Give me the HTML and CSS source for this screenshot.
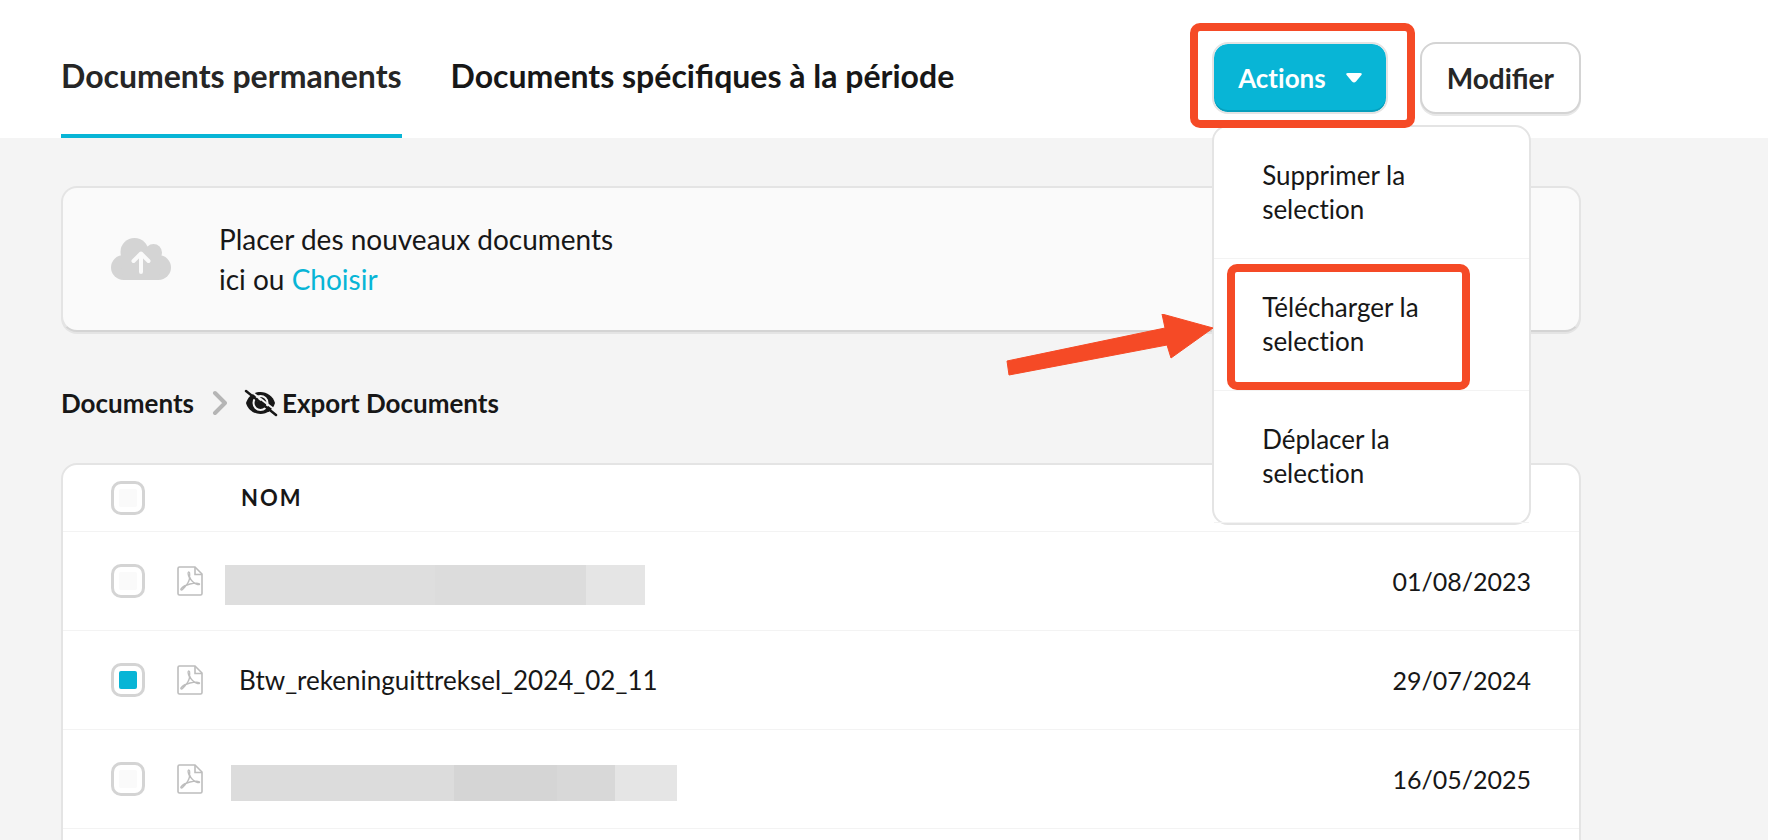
FILE: index.html
```html
<!DOCTYPE html>
<html lang="fr">
<head>
  <meta charset="UTF-8" />
  <meta name="viewport" content="width=device-width, initial-scale=1.0" />
  <title>Documents permanents</title>
  <link rel="stylesheet" href="styles.css">
</head>
<body>
  <!-- shared icons -->
  <svg class="sprite" aria-hidden="true">
    <symbol id="icon-pdf" viewBox="0 0 26 30">
      <path d="M1 2.5Q1 1 2.500 1H18L25 8V27.500Q25 29 23.500 29H2.500Q1 29 1 27.500Z" fill="none" stroke="#bdbdbd" stroke-width="1.600" />
      <path d="M18 1V8.500H25" fill="none" stroke="#bdbdbd" stroke-width="1.600" />
      <path d="M12 6C10.500 6 11 9 12.500 12C12.500 16 8.500 20.500 5.500 23.500C4.500 24.500 3.300 23.900 4 22.800C5.500 20.800 9 19 13 18C17 17 21 17 22.300 17.700C23.200 18.500 21.500 19 20 18.400C17 17.500 13.500 14 12.700 11C12.300 9 13.500 6.500 12 6Z" fill="none" stroke="#bdbdbd" stroke-width="1.300" stroke-linejoin="round" />
    </symbol>
  </svg>

  <header class="header">
    <nav class="tabs">
      <a class="tab active" href="#permanents">Documents permanents</a>
      <a class="tab" href="#periode">Documents spécifiques à la période</a>
    </nav>

    <div class="header-buttons">
      <div class="dropdown">
        <button class="btn btn-primary" type="button" aria-haspopup="true" aria-expanded="true">
          Actions
          <svg class="caret" viewBox="0 0 16 10" aria-hidden="true"><path d="M2 0H14Q17 0 15 2.500L10 8.500Q8 10.500 6 8.500L1 2.500Q-1 0 2 0Z" fill="#fff" /></svg>
        </button>
        <div class="mark mark-button"></div>
        <div class="menu">
          <button class="menu-item" type="button">Supprimer la selection</button>
          <button class="menu-item" type="button">Télécharger la selection</button>
          <button class="menu-item" type="button">Déplacer la selection</button>
          <div class="mark mark-item"></div>
          <svg class="arrow" viewBox="0 0 208 62" aria-hidden="true"><path d="M1 47L159 14L156 0L207 14L165 44L161 31L3 61Z" fill="#f54a26" stroke="#f54a26" stroke-linejoin="round" /></svg>
        </div>
      </div>
      <button class="btn" type="button">Modifier</button>
    </div>
  </header>

  <main class="content">
    <section class="upload">
      <svg class="cloud" viewBox="0 0 60 42" aria-hidden="true">
        <g fill="#d4d4d4">
          <circle cx="12.500" cy="29.500" r="12.500" />
          <circle cx="23.500" cy="14" r="14" />
          <circle cx="42.500" cy="14.500" r="8.500" />
          <circle cx="47.500" cy="29.500" r="12.500" />
          <path d="M10 16H50V30L47.500 42H12.500L10 30Z" />
        </g>
        <path d="M30 34V16M22.500 23L30 15.500L37.500 23" fill="none" stroke="#fafafa" stroke-width="4" stroke-linecap="round" stroke-linejoin="round" />
      </svg>
      <p>Placer des nouveaux documents<br>ici ou <a href="#choisir">Choisir</a></p>
    </section>

    <nav class="breadcrumb">
      <a href="#documents">Documents</a>
      <svg class="chevron" viewBox="0 0 16 26" aria-hidden="true"><path d="M4 3L14 13L4 23" fill="none" stroke="#b5b5b5" stroke-width="4" stroke-linecap="round" stroke-linejoin="round" /></svg>
      <a class="folder" href="#export">
        <svg class="eye" viewBox="0 0 34 28" aria-hidden="true">
          <path d="M2 14C4 7 10 3 16.500 3S29 7 31 14C29 21 23 25 16.500 25S4 21 2 14Z" fill="#171717" />
          <circle cx="16.500" cy="14" r="7" fill="#171717" stroke="#f4f4f4" stroke-width="2" />
          <circle cx="15" cy="11" r="2" fill="#f4f4f4" />
          <path d="M4 0L35 24" stroke="#f4f4f4" stroke-width="2" />
          <path d="M2 2L32 26" stroke="#171717" stroke-width="2.500" stroke-linecap="round" />
        </svg>
        Export Documents
      </a>
    </nav>

    <div class="card">
      <table class="documents">
        <thead>
          <tr>
            <th class="col-check"><input type="checkbox" aria-label="Tout sélectionner" /></th>
            <th class="col-icon"></th>
            <th class="col-name">Nom</th>
            <th class="col-date"></th>
          </tr>
        </thead>
        <tbody>
          <tr>
            <td class="col-check"><input type="checkbox" aria-label="Sélectionner le document du 01/08/2023" /></td>
            <td class="col-icon"><svg class="pdf"><use href="#icon-pdf" /></svg></td>
            <td class="col-name"><div class="redacted"></div></td>
            <td class="col-date">01/08/2023</td>
          </tr>
          <tr>
            <td class="col-check"><input type="checkbox" id="doc-2" checked /></td>
            <td class="col-icon"><svg class="pdf"><use href="#icon-pdf" /></svg></td>
            <td class="col-name"><label for="doc-2">Btw_rekeninguittreksel_2024_02_11</label></td>
            <td class="col-date">29/07/2024</td>
          </tr>
          <tr>
            <td class="col-check"><input type="checkbox" aria-label="Sélectionner le document du 16/05/2025" /></td>
            <td class="col-icon"><svg class="pdf"><use href="#icon-pdf" /></svg></td>
            <td class="col-name"><div class="redacted redacted-long"></div></td>
            <td class="col-date">16/05/2025</td>
          </tr>
        </tbody>
      </table>
    </div>
  </main>
</body>
</html>
```
FILE: styles.css
```css
:root {
  --blue: #08b5d6;
  --red: #f54a26;
  --bg: #f4f4f4;
  --dark: #171717;
  --border: #e4e4e4;
  --line: #f3f3f3;
}

* {
  box-sizing: border-box;
}

body {
  margin: 0;
  height: 100vh;
  overflow: hidden;
  background-color: var(--bg);
  color: var(--dark);
  font-family: Lato, "Liberation Sans", sans-serif;
  font-size: 26px;
}

a {
  color: inherit;
  text-decoration: none;
}

button {
  font-family: inherit;
  color: inherit;
  cursor: pointer;
}

.sprite {
  display: none;
}

.header {
  display: flex;
  justify-content: space-between;
  align-items: stretch;
  padding: 0 187px 0 61px;
  background: white;
}

.tabs {
  display: flex;
  gap: 49px;
}

.tab {
  padding: 56px 0 38px;
  border-bottom: 4px solid transparent;
  font-size: 32px;
  line-height: 40px;
  font-weight: bold;
}

.tab.active {
  color: #262626;
  border-bottom-color: var(--blue);
}

.header-buttons {
  display: flex;
  align-items: flex-start;
  gap: 32px;
  padding-top: 42px;
}

.dropdown {
  position: relative;
}

.btn {
  display: flex;
  align-items: center;
  gap: 20px;
  height: 72px;
  padding: 0 25px;
  background: white;
  color: #262626;
  border: 2px solid #d4d4d4;
  border-radius: 16px;
  box-shadow: 0 2px 0 #e8e8e8;
  font-size: 28px;
  font-weight: bold;
}

.btn-primary {
  padding: 0 24px;
  background: var(--blue);
  background-clip: padding-box;
  color: white;
  border-color: var(--border);
  box-shadow: inset 0 -2px 0 #079fbc;
  font-size: 26px;
  font-variant-ligatures: none;
}

.caret {
  width: 16px;
  height: 10px;
}

.menu {
  position: absolute;
  top: 83px;
  left: 0;
  z-index: 2;
  width: 319px;
  background: white;
  border: 2px solid var(--border);
  border-radius: 16px;
}

.menu-item {
  display: block;
  width: 100%;
  padding: 31px 100px 32px 48px;
  background: none;
  border: none;
  border-bottom: 1px solid var(--line);
  font-size: 26px;
  font-variant-ligatures: none;
  line-height: 34px;
  text-align: left;
}

/* highlights drawn over the menu */
.mark {
  position: absolute;
  z-index: 3;
  border: 8px solid var(--red);
  border-radius: 10px;
  pointer-events: none;
}

.mark-button {
  top: -19px;
  left: -22px;
  width: 225px;
  height: 105px;
}

.mark-item {
  top: 137px;
  left: 13px;
  width: 243px;
  height: 126px;
}

.arrow {
  position: absolute;
  top: 187px;
  right: 315px;
  width: 208px;
  height: 62px;
}

.content {
  padding: 48px 187px 0 61px;
}

.upload {
  display: flex;
  align-items: center;
  gap: 48px;
  padding: 31px 48px;
  background: #fafafa;
  border: 2px solid var(--border);
  border-bottom-color: #d4d4d4;
  border-radius: 16px;
  box-shadow: 0 2px 0 var(--border);
}

.upload p {
  margin: 0;
  font-size: 28px;
  line-height: 40px;
}

.upload a {
  color: var(--blue);
}

.cloud {
  width: 60px;
  height: 42px;
}

.breadcrumb {
  display: flex;
  align-items: center;
  gap: 17px;
  padding: 55px 0 44px;
  font-weight: bold;
  line-height: 32px;
}

.chevron {
  width: 16px;
  height: 26px;
}

.folder {
  display: flex;
  align-items: center;
  gap: 4px;
}

.eye {
  width: 34px;
  height: 28px;
}

.card {
  padding-bottom: 48px;
  background: white;
  border: 2px solid var(--border);
  border-radius: 16px;
}

.documents {
  width: 100%;
  border-collapse: collapse;
}

.documents th,
.documents td {
  height: 99px;
  padding: 0;
  border-bottom: 1px solid var(--line);
  text-align: left;
}

.documents th {
  height: 66px;
  font-size: 22px;
  letter-spacing: 2px;
  text-transform: uppercase;
}

.documents th.col-name {
  padding-left: 2px;
}

.documents .col-check {
  width: 114px;
  padding-left: 48px;
}

.documents .col-icon {
  width: 62px;
}

.documents .col-date {
  padding-right: 48px;
  font-size: 25px;
  text-align: right;
}

.documents label {
  font-variant-ligatures: none;
}

input[type="checkbox"] {
  appearance: none;
  display: block;
  width: 34px;
  height: 34px;
  margin: 0;
  padding: 5px;
  background: #fafafa content-box;
  border: 3px solid #d4d4d4;
  border-radius: 10px;
}

input[type="checkbox"]:checked {
  background-color: var(--blue);
}

.pdf {
  display: block;
  width: 26px;
  height: 30px;
}

.redacted {
  width: 420px;
  height: 40px;
  margin: 8px 0 0 -14px;
  background: linear-gradient(to right, #dedede 50%, #dcdcdc 50% 86%, #e5e5e5 86%);
}

.redacted-long {
  width: 446px;
  height: 36px;
  margin-left: -8px;
  background: linear-gradient(to right, #dcdcdc 50%, #d5d5d5 50% 73%, #d8d8d8 73% 86%, #e5e5e5 86%);
}
```
